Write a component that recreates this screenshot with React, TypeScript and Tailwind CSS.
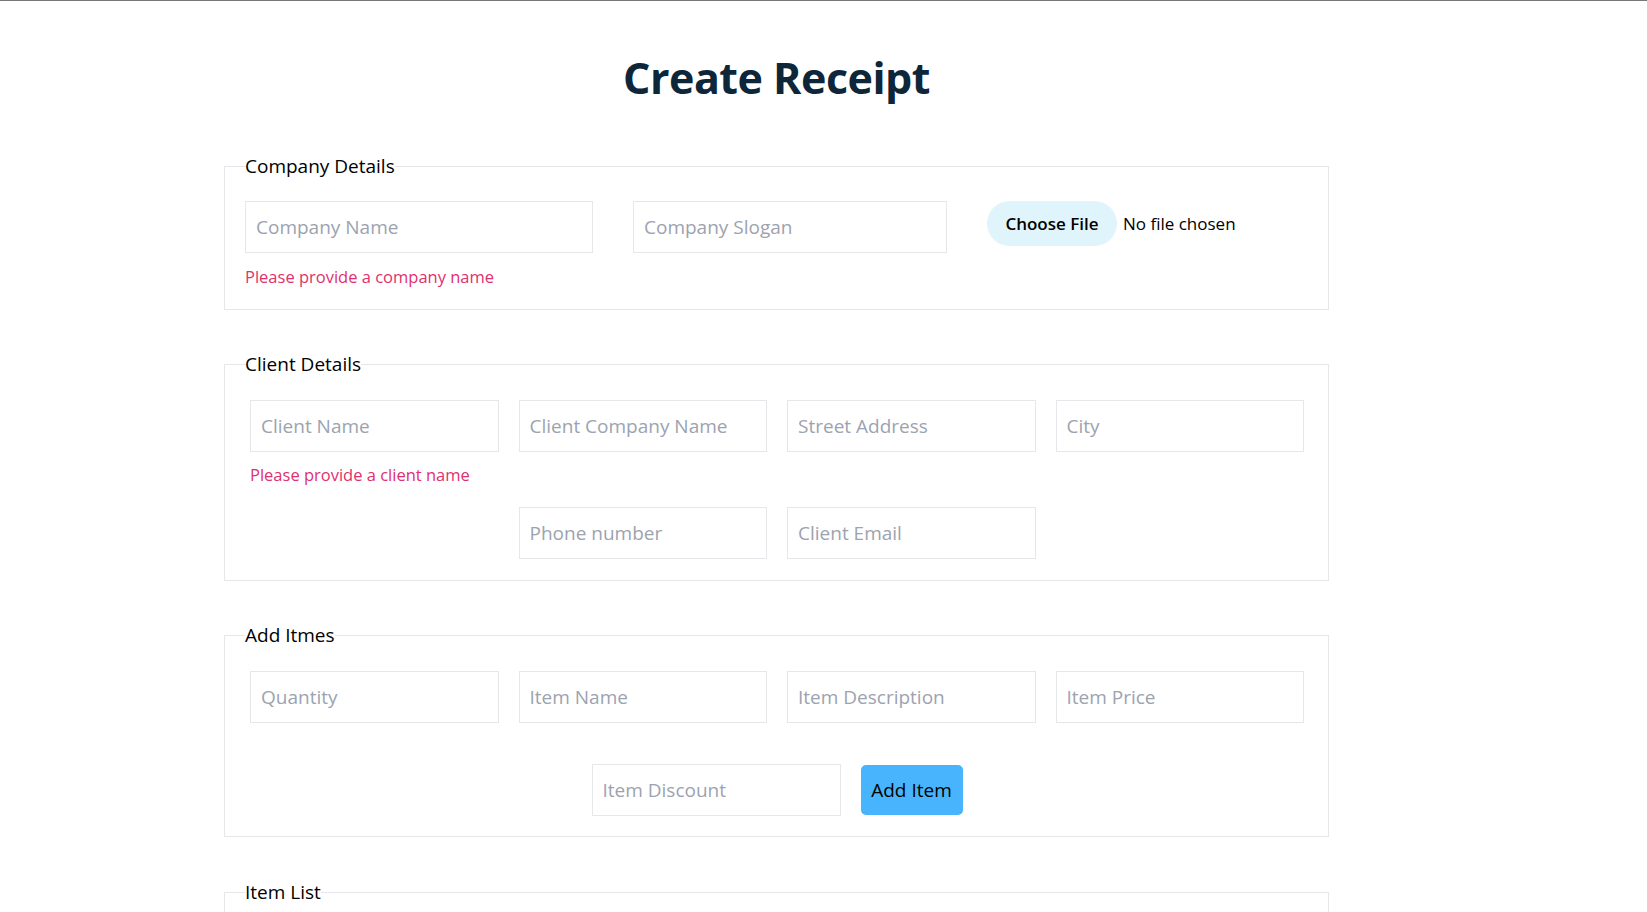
import React from "react";

const inputCls =
  "h-[52px] border border-[#e5e7eb] bg-white px-[10px] text-[19px] text-[#111] placeholder:text-[#9ca3af] outline-none";

function Field({ placeholder, w }: { placeholder: string; w?: string }) {
  return <input placeholder={placeholder} className={`${inputCls} ${w ?? "w-full"}`} />;
}

export default function App() {
  return (
    <div className="min-h-screen bg-white border-t border-[#777] font-['Open_Sans',sans-serif]">
      <div className="ml-[224px] w-[1105px] pb-10">
        <h1 className="mt-[49px] text-center text-[43px] leading-[56px] tracking-[-0.5px] font-bold text-[#0d2639]">
          Create Receipt
        </h1>

        <fieldset className="mt-[47px] border border-[#e5e7eb] px-[20px] pb-[20px]">
          <legend className="text-[19px] leading-[26px] text-black">Company Details</legend>
          <div className="mt-[22px] flex items-start">
            <div className="flex flex-col">
              <Field placeholder="Company Name" w="w-[348px]" />
              <p className="mt-[12px] text-[16.5px] leading-[24px] text-[#e0306e]">
                Please provide a company name
              </p>
            </div>
            <Field placeholder="Company Slogan" w="ml-[40px] w-[314px]" />
            <div className="ml-[40px] flex items-center">
              <button className="h-[45px] w-[130px] rounded-full bg-[#e0f4fc] text-[17px] font-semibold text-black">
                Choose File
              </button>
              <span className="ml-[6px] text-[17px] text-black">No file chosen</span>
            </div>
          </div>
        </fieldset>

        <fieldset className="mt-[41px] border border-[#e5e7eb] px-[20px] pb-[21px]">
          <legend className="text-[19px] leading-[26px] text-black">Client Details</legend>
          <div className="mt-[23px] ml-[5px] grid w-[1054px] grid-cols-4 gap-x-5">
            <Field placeholder="Client Name" />
            <Field placeholder="Client Company Name" />
            <Field placeholder="Street Address" />
            <Field placeholder="City" />
            <p className="col-span-4 mt-[11px] text-[16.5px] leading-[24px] text-[#e0306e]">
              Please provide a client name
            </p>
            <div className="col-start-2 mt-[20px]">
              <Field placeholder="Phone number" />
            </div>
            <div className="mt-[20px]">
              <Field placeholder="Client Email" />
            </div>
          </div>
        </fieldset>

        <fieldset className="mt-[41px] border border-[#e5e7eb] px-[20px] pb-[20px]">
          <legend className="text-[19px] leading-[26px] text-black">Add Itmes</legend>
          <div className="mt-[23px] ml-[5px] grid w-[1054px] grid-cols-4 gap-x-5">
            <Field placeholder="Quantity" />
            <Field placeholder="Item Name" />
            <Field placeholder="Item Description" />
            <Field placeholder="Item Price" />
          </div>
          <div className="mt-[41px] ml-[5px] flex w-[1054px] items-center justify-center">
            <Field placeholder="Item Discount" w="w-[249px]" />
            <button className="ml-[20px] h-[50px] w-[102px] rounded-[5px] bg-[#47b4fd] text-[19px] text-black">
              Add Item
            </button>
          </div>
        </fieldset>

        <fieldset className="mt-[42px] border border-[#e5e7eb] px-[20px] pb-[20px] h-[120px]">
          <legend className="text-[19px] leading-[26px] text-black">Item List</legend>
        </fieldset>
      </div>
    </div>
  );
}
